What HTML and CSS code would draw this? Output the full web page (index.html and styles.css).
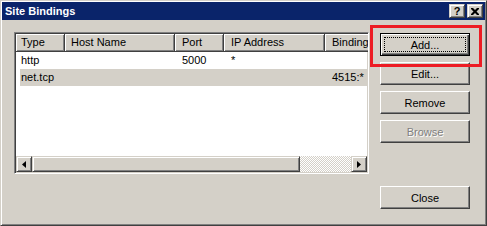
FILE: index.html
```html
<!DOCTYPE html>
<html lang="en">
<head>
  <meta charset="UTF-8" />
  <title>Site Bindings</title>
  <link rel="stylesheet" href="styles.css">
</head>
<body>
  <div class="dialog">
    <div class="titlebar">
      <span class="title">Site Bindings</span>
      <div class="caption-buttons">
        <button class="cap-btn help">?</button>
        <button class="cap-btn">
          <svg width="8" height="7" viewBox="0 0 8 7">
            <path d="M0 0h2l2 2 2-2h2v1l-2.5 2.5L8 6v1H6L4 5 2 7H0V6l2.5-2.5L0 1z" fill="#000"/>
          </svg>
        </button>
      </div>
    </div>

    <div class="dialog-body">
      <div class="listview">
        <div class="lv-header">
          <div class="lv-cell col-type">Type</div>
          <div class="lv-cell col-host">Host Name</div>
          <div class="lv-cell col-port">Port</div>
          <div class="lv-cell col-ip">IP Address</div>
          <div class="lv-cell col-binding">Binding</div>
        </div>
        <div class="lv-rows">
          <div class="lv-row">
            <div class="lv-cell col-type">http</div>
            <div class="lv-cell col-host"></div>
            <div class="lv-cell col-port">5000</div>
            <div class="lv-cell col-ip">*</div>
            <div class="lv-cell col-binding"></div>
          </div>
          <div class="lv-row selected">
            <div class="lv-cell col-type">net.tcp</div>
            <div class="lv-cell col-host"></div>
            <div class="lv-cell col-port"></div>
            <div class="lv-cell col-ip"></div>
            <div class="lv-cell col-binding">4515:*</div>
          </div>
        </div>
        <div class="hscroll">
          <div class="scroll-btn">
            <svg width="4" height="7" viewBox="0 0 4 7"><path d="M4 0v7L0 3.5z" fill="#000"/></svg>
          </div>
          <div class="scroll-thumb"></div>
          <div class="scroll-track"></div>
          <div class="scroll-btn">
            <svg width="4" height="7" viewBox="0 0 4 7"><path d="M0 0v7l4-3.5z" fill="#000"/></svg>
          </div>
        </div>
      </div>

      <div class="button-col">
        <button class="btn default"><span class="focus">Add...</span></button>
        <button class="btn">Edit...</button>
        <button class="btn">Remove</button>
        <button class="btn" disabled>Browse</button>
        <button class="btn close">Close</button>
      </div>
    </div>

    <div class="highlight-box"></div>
  </div>
</body>
</html>
```

FILE: styles.css
```css
* {
  box-sizing: border-box;
}

body {
  margin: 0;
  background: #d4d0c8;
  font-family: "Liberation Sans", Arial, sans-serif;
  font-size: 11px;
  color: #000;
}

.dialog {
  position: relative;
  width: 487px;
  height: 226px;
  display: flex;
  flex-direction: column;
  padding: 1px;
  background: #d4d0c8;
  border: 1px solid;
  border-color: #d4d0c8 #404040 #404040 #d4d0c8;
  box-shadow: inset 1px 1px #fff, inset -1px -1px #808080;
}

/* title bar */
.titlebar {
  height: 18px;
  display: flex;
  align-items: center;
  justify-content: space-between;
  padding: 0 2px 0 3px;
  background: #0a246a;
}

.title {
  color: #fff;
  font-weight: bold;
  font-size: 11px;
}

.caption-buttons {
  display: flex;
  gap: 2px;
}

.cap-btn {
  width: 16px;
  height: 14px;
  padding: 0;
  display: flex;
  align-items: center;
  justify-content: center;
  background: #d4d0c8;
  border: 1px solid;
  border-color: #d4d0c8 #404040 #404040 #d4d0c8;
  box-shadow: inset 1px 1px #fff, inset -1px -1px #808080;
  font-family: "Liberation Sans", Arial, sans-serif;
  font-weight: bold;
  font-size: 11px;
  line-height: 1;
}

/* body */
.dialog-body {
  flex: 1;
  display: flex;
  padding: 12px 0 0 12px;
}

.listview {
  width: 355px;
  height: 142px;
  display: flex;
  flex-direction: column;
  overflow: hidden;
  background: #fff;
  border: 1px solid;
  border-color: #808080 #fff #fff #808080;
  box-shadow: inset 1px 1px #404040, inset -1px -1px #d4d0c8;
  padding: 1px;
}

.lv-header,
.lv-row {
  display: flex;
  flex-shrink: 0;
  white-space: nowrap;
}

.lv-header {
  height: 18px;
}

.lv-header .lv-cell {
  background: #d4d0c8;
  box-shadow: inset 1px 1px #fff, inset -1px -1px #808080;
  border-right: 1px solid #404040;
  border-bottom: 1px solid #404040;
  line-height: 16px;
}

.lv-cell {
  flex-shrink: 0;
  padding-left: 6px;
  overflow: hidden;
}

.col-type { width: 49px; padding-left: 5px; }
.col-host { width: 110px; }
.col-port { width: 49px; padding-left: 7px; }
.col-ip { width: 101px; padding-left: 7px; }
.col-binding { width: 80px; padding-left: 7px; }

.lv-rows {
  flex: 1;
}

.lv-row {
  height: 17px;
  line-height: 17px;
}

.lv-row.selected {
  background: linear-gradient(to right, #fff 4px, #d4d0c8 4px);
}

/* horizontal scrollbar */
.hscroll {
  height: 16px;
  display: flex;
  flex-shrink: 0;
}

.scroll-btn,
.scroll-thumb {
  background: #d4d0c8;
  border: 1px solid;
  border-color: #d4d0c8 #404040 #404040 #d4d0c8;
  box-shadow: inset 1px 1px #fff, inset -1px -1px #808080;
}

.scroll-btn {
  width: 16px;
  display: flex;
  align-items: center;
  justify-content: center;
}

.scroll-thumb {
  width: 268px;
}

.scroll-track {
  flex: 1;
  background: repeating-conic-gradient(#d4d0c8 0 25%, #fff 0 50%) 0 0 / 2px 2px;
}

/* buttons */
.button-col {
  width: 90px;
  margin-left: 11px;
  padding-top: 1px;
  display: flex;
  flex-direction: column;
  gap: 6px;
}

.btn {
  width: 90px;
  height: 23px;
  padding: 0;
  background: #d4d0c8;
  border: 1px solid;
  border-color: #fff #404040 #404040 #fff;
  box-shadow: inset -1px -1px #808080;
  font-family: "Liberation Sans", Arial, sans-serif;
  font-size: 11px;
  color: #000;
}

.btn.default {
  display: flex;
  padding: 3px;
  border-color: #000;
  box-shadow: inset 1px 1px #fff, inset -1px -1px #404040, inset -2px -2px #808080;
}

.btn .focus {
  flex: 1;
  display: flex;
  align-items: center;
  justify-content: center;
  border: 1px dotted #000;
}

.btn:disabled {
  color: #808080;
  text-shadow: 1px 1px #fff;
}

.btn.close {
  margin-top: 37px;
}

/* annotation box */
.highlight-box {
  position: absolute;
  left: 369px;
  top: 24px;
  width: 112px;
  height: 42px;
  border: 3px solid #ed1c24;
}
```
